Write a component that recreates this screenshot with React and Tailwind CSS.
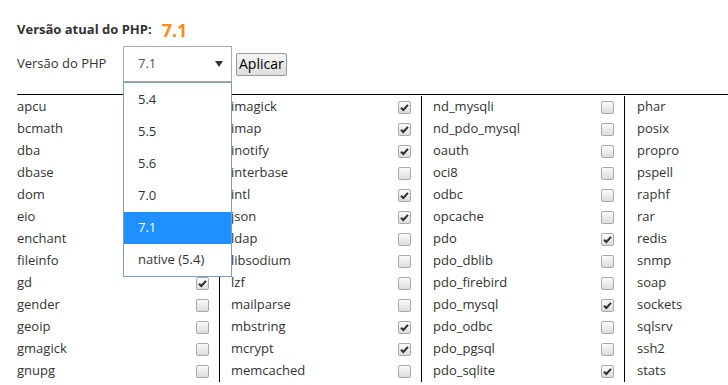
import React from 'react';

const columns = [
  [
    ['apcu', false], ['bcmath', false], ['dba', false], ['dbase', false], ['dom', false],
    ['eio', false], ['enchant', false], ['fileinfo', false], ['gd', true], ['gender', false],
    ['geoip', false], ['gmagick', false], ['gnupg', false],
  ],
  [
    ['imagick', true], ['imap', true], ['inotify', true], ['interbase', false], ['intl', true],
    ['json', true], ['ldap', false], ['libsodium', false], ['lzf', false], ['mailparse', false],
    ['mbstring', true], ['mcrypt', true], ['memcached', false],
  ],
  [
    ['nd_mysqli', false], ['nd_pdo_mysql', false], ['oauth', false], ['oci8', false], ['odbc', false],
    ['opcache', false], ['pdo', true], ['pdo_dblib', false], ['pdo_firebird', false], ['pdo_mysql', true],
    ['pdo_odbc', false], ['pdo_pgsql', false], ['pdo_sqlite', true],
  ],
  [
    ['phar', false], ['posix', false], ['propro', false], ['pspell', false], ['raphf', false],
    ['rar', false], ['redis', true], ['snmp', false], ['soap', false], ['sockets', true],
    ['sqlsrv', false], ['ssh2', false], ['stats', true],
  ],
];

const versions = ['5.4', '5.5', '5.6', '7.0', '7.1', 'native (5.4)'];

const Checkbox = ({ checked }) => (
  <span className="w-[13px] h-[13px] shrink-0 rounded-[2px] border border-[#a9a9a9] bg-gradient-to-b from-[#fbfbfb] to-[#dcdcdc] flex items-center justify-center">
    {checked && (
      <svg width="11" height="11" viewBox="0 0 11 11">
        <path d="M2 5.8 L4.3 8 L9 2.8" fill="none" stroke="#2e2e2e" strokeWidth="2" />
      </svg>
    )}
  </span>
);

const App = () => {
  return (
    <div className="w-[728px] h-[385px] overflow-hidden bg-white text-[#333] text-[13px] font-['Open_Sans',sans-serif]">
      <div className="pl-[17px] pt-[19px]">
        {/* Header */}
        <div className="flex items-center h-[22px]">
          <span className="font-bold text-[13px]">Versão atual do PHP:</span>
          <span className="ml-[10px] font-bold text-[18px] text-[#ff8a14] leading-none">7.1</span>
        </div>

        {/* Version select */}
        <div className="flex items-center mt-[5px] h-[36px]">
          <span className="w-[106px]">Versão do PHP</span>
          <div className="relative">
            <div className="w-[109px] h-[36px] border border-[#aaa] bg-white flex items-center justify-between pl-[14px] pr-[8px] text-[#555]">
              <span>7.1</span>
              <svg width="8" height="6" viewBox="0 0 8 6">
                <path d="M0 0 H8 L4 6 Z" fill="#333" />
              </svg>
            </div>
            <div className="absolute left-0 top-[36px] w-[109px] pt-[1px] border border-[#7f9db9] bg-white z-10">
              {versions.map((v) => (
                <div
                  key={v}
                  className={`h-[32px] flex items-center pl-[14px] ${v === '7.1' ? 'bg-[#1e90ff] text-white' : ''}`}
                >
                  {v}
                </div>
              ))}
            </div>
          </div>
          <button className="ml-[4px] h-[23px] px-[2px] border border-[#999] rounded-[2px] bg-gradient-to-b from-[#f6f6f6] to-[#dddddd] text-[14px] text-black leading-none">
            Aplicar
          </button>
        </div>

        {/* Extensions table */}
        <div className="flex mt-[12px] pt-[1px] border-t border-black">
          {columns.map((col, ci) => (
            <div
              key={ci}
              className={
                ci === 0
                  ? 'w-[202px] shrink-0 pr-[10px]'
                  : ci === 1
                  ? 'w-[202px] shrink-0 border-l border-black pl-[11px] pr-[10px]'
                  : ci === 2
                  ? 'w-[203px] shrink-0 border-l border-black pl-[11px] pr-[10px]'
                  : 'w-[202px] shrink-0 border-l border-black pl-[12px] pr-[10px]'
              }
            >
              {col.map(([name, checked]) => (
                <div key={name} className="h-[22px] flex items-center justify-between">
                  <span>{name}</span>
                  <Checkbox checked={checked} />
                </div>
              ))}
            </div>
          ))}
        </div>
      </div>
    </div>
  );
};

export default App;
